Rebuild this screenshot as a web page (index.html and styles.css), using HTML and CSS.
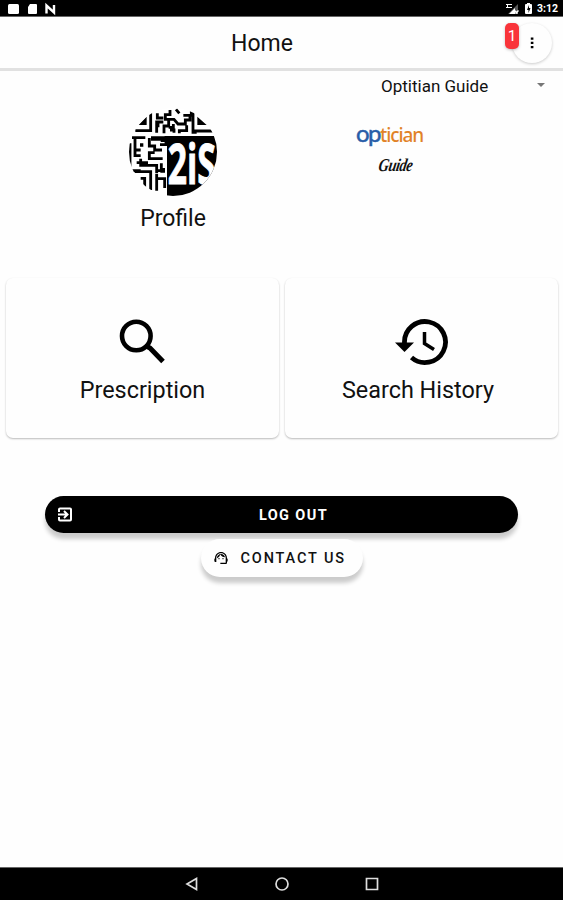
FILE: index.html
```html
<!DOCTYPE html>
<html lang="en">
<head>
<meta charset="utf-8">
<title>Home</title>
<link rel="stylesheet" href="styles.css">
</head>
<body>
<div class="status">
  <svg class="status-left" width="50" height="16" viewBox="0 0 50 16" fill="#fff">
    <rect x="0" y="4" width="11" height="10" rx="1.5"/>
    <path d="M22 4h6q1 0 1 1v8q0 1-1 1h-7q-1 0-1-1V7z"/>
    <path d="M38.500 13.500V5.500l7.500 7V5" fill="none" stroke="#fff" stroke-width="2.400"/>
  </svg>
  <div class="status-right">
    <svg width="29" height="16" viewBox="0 0 29 16" fill="#fff">
      <path d="M12 4v10H2z" opacity=".35"/><path d="M9 8v6H3z"/><path d="M0 4h6v1H0zM0 7h6v1H0zM1 4h1v4H1zM9 10l3 3-1 1-3-3zM12 10l1 1-3 3-1-1z"/>
      <path d="M21 3h3v1h1q1 0 1 1v8q0 1-1 1h-5q-1 0-1-1V5q0-1 1-1h1z"/><path d="M23 5l-2 5h1.500v3l2-5H23z" fill="#000"/>
    </svg>
    <span>3:12</span>
  </div>
</div>
<header class="header">
  <h1>Home</h1>
  <button class="more" aria-label="More">
    <svg width="4" height="12" viewBox="0 0 4 12"><path d="M.8.500h2.600v2.300H.8zM.8 4.700h2.600V7H.8zM.8 8.900h2.600v2.300H.8z"/></svg>
    <span class="badge">1</span>
  </button>
</header>
<main>
  <section class="top">
    <div class="profile">
      <svg class="avatar" viewBox="27 24 264 264">
        <defs><clipPath id="round"><circle cx="159" cy="156" r="132"/></clipPath></defs>
        <g clip-path="url(#round)">
          <path fill="#fff" d="M26 22h266v266H26z"/>
          <g fill="none" stroke="#000" stroke-width="8.500">
            <path d="M92 28v64H46M230 97h-11V28M219 93h60M112 40v14h18M110 98V66h20M114 68v14M150 30v14h-14v14h26l12 14h22v-12h14V46M168 28l10 12M190 46h24V30M146 62v16h-14v22M160 72v10h-14M162 98v-8h-12M178 100v-8h22v-16"/>
            <path d="M30 130v70M36 113h40M45 113v54h17M62 150H45M88 114v24h16v12h22M104 158H88v18h40M62 176v20h30M50 188h34M32 212h30M92 196h18v24M44 215h48v55M62 235h12v30M110 222v50M110 236h24v28M124 190v22h-14M122 122h18M138 108v26h-18"/>
          </g>
          <path d="M56 75l24-25v25zM232 50l28 25h-28zM93 109h44v13H93zM60 130h10v10H60zM121 204h14v14h-14zM141 108h152v182H141z"/>
          <text class="mark" x="143" y="253" textLength="144" lengthAdjust="spacingAndGlyphs">2iS</text>
        </g>
      </svg>
      <p class="profile-name">Profile</p>
    </div>
    <div class="shop">
      <div class="select"><span>Optitian Guide</span><i></i></div>
      <div class="logo">
        <p class="name"><span class="op">op</span><span class="tician">tician</span></p>
        <p class="guide">Guide</p>
      </div>
    </div>
  </section>
  <section class="cards">
    <div class="card">
      <svg width="54" height="54" viewBox="0 0 54 54" fill="none" stroke="#000"><circle cx="20.300" cy="21" r="14.300" stroke-width="4.600"/><path d="M31 31.500l3 1.500L47 46.500" stroke-width="5"/></svg>
      <p>Prescription</p>
    </div>
    <div class="card">
      <svg width="54" height="54" viewBox="0 0 54 54"><path d="M9.500 28a20.500 20.500 0 1 1 7 14.500" fill="none" stroke="#000" stroke-width="4.800"/><path d="M0 27.500h19l-9.500 9.500z"/><path d="M29.500 17v11.500l9.500 6" fill="none" stroke="#000" stroke-width="3.500"/></svg>
      <p class="history">Search History</p>
    </div>
  </section>
  <section class="actions">
    <button class="btn logout">
      <svg width="16" height="16" viewBox="0 0 16 16" fill="none" stroke="#fff" stroke-width="2"><path d="M2 5V2.500q0-1 1-1h10q1 0 1 1v10q0 1-1 1H3q-1 0-1-1V10M1 7.500h9M7 4l3.500 3.500L7 11"/></svg>
      <span>LOG OUT</span>
    </button>
    <button class="btn contact">
      <svg width="16" height="16" viewBox="0 0 24 24"><path d="M21 12.220C21 6.730 16.740 3 12 3c-4.690 0-9 3.650-9 9.280-.6.340-1 .98-1 1.720v2c0 1.100.9 2 2 2h1v-6.100c0-3.870 3.130-7 7-7s7 3.130 7 7V19h-8v2h8c1.100 0 2-.9 2-2v-1.220c.59-.31 1-.92 1-1.640v-2.300c0-.7-.41-1.310-1-1.620z"/><circle cx="9" cy="13" r="1"/><circle cx="15" cy="13" r="1"/><path d="M18 11.030C17.520 8.180 15.040 6 12.050 6c-3.030 0-6.290 2.510-6.030 6.450 2.470-1.010 4.330-3.210 4.860-5.890 1.310 2.630 4 4.440 7.120 4.470z"/></svg>
      <span>CONTACT US</span>
    </button>
  </section>
</main>
<nav class="nav">
  <svg width="14" height="14" viewBox="0 0 14 14"><path d="M11.500 1.500v11L2 7z"/></svg>
  <svg width="14" height="14" viewBox="0 0 14 14"><circle cx="7" cy="7" r="6"/></svg>
  <svg width="14" height="14" viewBox="0 0 14 14"><path d="M1.500 1.500h11v11h-11z"/></svg>
</nav>
</body>
</html>
```
FILE: styles.css
```css
* { box-sizing: border-box; }
body {
  margin: 0;
  height: 900px;
  display: flex;
  flex-direction: column;
  background: #fefefe;
  color: #111;
  font-family: Roboto, "Liberation Sans", sans-serif;
  overflow: hidden;
}
h1, p { margin: 0; font-weight: 400; }
button { border: 0; padding: 0; font-family: inherit; color: inherit; }
svg { display: block; flex: none; }

.status {
  height: 17px;
  padding: 0 5px 0 8px;
  display: flex;
  justify-content: space-between;
  background: #000;
  border-bottom: 1px solid #666;
  color: #fff;
}
.status-right { display: flex; gap: 2px; font-size: 10.500px; font-weight: 700; line-height: 18px; }

.header {
  height: 54px;
  padding-right: 11px;
  display: grid;
  grid-template-columns: 1fr 40px;
  align-items: center;
  border-bottom: 3px solid #e1e1e1;
}
.header h1 { padding: 3px 0 0 12px; text-align: center; font-size: 23px; line-height: 28px; }
.more {
  position: relative;
  width: 40px;
  height: 40px;
  border-radius: 50%;
  display: flex;
  align-items: center;
  justify-content: center;
  background: #fefefe;
  box-shadow: 0 1px 3px rgba(0, 0, 0, .2);
}
.badge {
  position: absolute;
  left: -7px;
  top: 0;
  width: 14px;
  height: 26px;
  border-radius: 5px;
  background: #f9343a;
  box-shadow: 0 1px 3px rgba(0, 0, 0, .25);
  color: #fff;
  font-size: 15.500px;
  line-height: 27px;
  text-align: center;
}

main { flex: 1; }
.top { height: 207px; display: grid; grid-template-columns: 346px 217px; }
.profile { padding-top: 37px; display: flex; flex-direction: column; align-items: center; }
.avatar { width: 88px; height: 88px; }
.mark { fill: #fff; stroke: #fff; stroke-width: 3; font: 700 165px "Open Sans", sans-serif; }
.profile-name { margin-top: 9px; font-size: 23px; line-height: 28px; }
.select { height: 30px; padding: 0 18px 0 35px; display: flex; align-items: center; justify-content: space-between; font-size: 17px; }
.select i { border: 4px solid transparent; border-top-color: #777; border-bottom: 0; margin-bottom: 2px; }
.logo { width: 90px; margin: 17px 0 0 10px; }
.name { display: flex; align-items: baseline; height: 34px; line-height: 30px; white-space: nowrap; }
.op { color: #285da8; font-family: Lato, sans-serif; font-size: 24px; letter-spacing: -1.500px; -webkit-text-stroke: .5px #285da8; }
.tician { color: #e18227; font-family: "Noto Sans", sans-serif; font-weight: 500; font-size: 19px; letter-spacing: -1.100px; }
.guide { padding-left: 22px; color: #111; font: italic 700 18px/26px "Liberation Serif", serif; transform: skewX(-10deg) scaleX(.8); transform-origin: 22px 18px; letter-spacing: -.6px; }

.cards { padding: 0 5px 0 6px; display: grid; grid-template-columns: 1fr 1fr; gap: 6px; }
.card {
  height: 160px;
  padding-top: 37px;
  display: flex;
  flex-direction: column;
  align-items: center;
  border-radius: 7px;
  background: #fefefe;
  box-shadow: 0 1px 2px rgba(0, 0, 0, .27);
}
.card p { margin-top: 7px; font-size: 23.400px; line-height: 28px; }
.card .history { padding-right: 7px; }

.actions { padding-top: 58px; display: flex; flex-direction: column; align-items: center; }
.btn { display: flex; align-items: center; border-radius: 20px; font-size: 14.500px; font-weight: 500; box-shadow: 0 6px 4px rgba(0, 0, 0, .2); }
.logout { width: 473px; height: 37px; padding: 0 12px; background: #000; color: #fff; font-weight: 700; letter-spacing: 1.400px; }
.logout span { flex: 1; padding: 2px 0 0 8px; text-align: center; }
.contact { width: 162px; height: 38px; margin-top: 6px; padding-left: 12px; gap: 12px; background: #fefefe; letter-spacing: 1.850px; }
.contact span { padding-top: 1px; }

.nav { height: 33px; padding-left: 1px; display: flex; justify-content: center; align-items: center; gap: 76px; background: #000; border-top: 1px solid #666; }
.nav svg { fill: none; stroke: #ddd; stroke-width: 1.700; }
```
